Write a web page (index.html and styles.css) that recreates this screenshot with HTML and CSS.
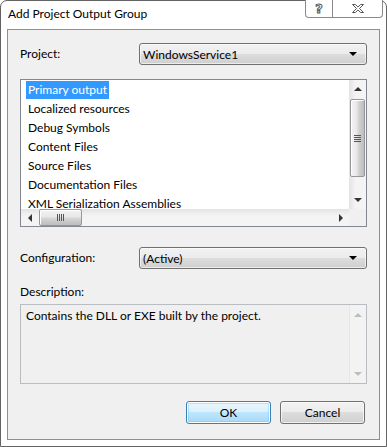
FILE: index.html
```html
<!DOCTYPE html>
<html>
<head>
<meta charset="utf-8">
<link rel="stylesheet" href="styles.css">
</head>
<body>
<div class="window">
  <div class="titlebar">
    <div class="title">Add Project Output Group</div>
    <div class="caption-btns">
      <div class="cap help"><span class="qmark">?</span></div>
      <div class="cap close">
        <svg width="14" height="11" viewBox="0 0 14 11"><path d="M1.5 1.5h3l2.5 2.6 2.5-2.6h3l-4 4 4 4h-3l-2.5-2.6-2.5 2.6h-3l4-4z" fill="#fff" stroke="#555" stroke-width="1" stroke-linejoin="round"/></svg>
      </div>
    </div>
  </div>
  <div class="client">
    <div class="row first">
      <div class="label">Project:</div>
      <div class="combo"><span>WindowsService1</span><i class="drop"></i></div>
    </div>
    <div class="listbox">
      <div class="items">
        <div class="item sel">Primary output</div>
        <div class="item">Localized resources</div>
        <div class="item">Debug Symbols</div>
        <div class="item">Content Files</div>
        <div class="item">Source Files</div>
        <div class="item">Documentation Files</div>
        <div class="item">XML Serialization Assemblies</div>
      </div>
      <div class="vscroll">
        <div class="arrow"><i class="tri up"></i></div>
        <div class="vtrack">
          <div class="vthumb"><i class="grip-v"></i></div>
        </div>
        <div class="arrow"><i class="tri down"></i></div>
      </div>
      <div class="hscroll">
        <div class="harrow"><i class="tri left"></i></div>
        <div class="htrack">
          <div class="hthumb"><i class="grip-h"></i></div>
        </div>
        <div class="harrow"><i class="tri right"></i></div>
      </div>
      <div class="corner"></div>
    </div>
    <div class="row config">
      <div class="label">Configuration:</div>
      <div class="combo"><span>(Active)</span><i class="drop"></i></div>
    </div>
    <div class="desc-label">Description:</div>
    <div class="descbox">
      <div class="desc-text">Contains the DLL or EXE built by the project.</div>
      <div class="dscroll">
        <i class="tri up dis"></i>
        <i class="tri down dis"></i>
      </div>
    </div>
    <div class="buttons">
      <button class="btn default">OK</button>
      <button class="btn">Cancel</button>
    </div>
  </div>
</div>
</body>
</html>
```

FILE: styles.css
```css
html, body {
  margin: 0;
  padding: 0;
  background: #ffffff;
}
body {
  font-family: "Lato", "Noto Sans", sans-serif;
  font-size: 12px;
  color: #000;
}
.window {
  width: 387px;
  height: 447px;
  box-sizing: border-box;
  border: 1px solid #636363;
  border-radius: 7px 7px 0 0;
  background: #ffffff;
  padding: 0 6px 6px 6px;
  display: flex;
  flex-direction: column;
}
.titlebar {
  height: 28px;
  display: flex;
  justify-content: space-between;
  align-items: flex-start;
  margin-right: -3px;
}
.title {
  padding-top: 5px;
  padding-left: 1px;
  font-size: 12px;
  line-height: 16px;
}
.caption-btns {
  display: flex;
  height: 18px;
  border: 1px solid #8a8a8a;
  border-top: none;
  border-radius: 0 0 4px 4px;
  background: #fff;
  box-sizing: border-box;
  margin-top: -1px;
}
.cap {
  display: flex;
  align-items: center;
  justify-content: center;
}
.help {
  width: 26px;
  border-right: 1px solid #8a8a8a;
}
.close {
  width: 49px;
}
.qmark {
  font-family: "DejaVu Sans", sans-serif;
  font-weight: bold;
  font-size: 13px;
  line-height: 14px;
  color: #fff;
  -webkit-text-stroke: 1px #555;
}
.client {
  flex: 1;
  border: 1px solid #8e8f8f;
  background: #f0f0f0;
  padding: 0 12px 0 12px;
  display: flex;
  flex-direction: column;
}
.row {
  display: grid;
  grid-template-columns: 119px 1fr;
  align-items: center;
}
.row.first { margin-top: 13px; }
.row.config { margin-top: 20px; }
.label {
  line-height: 16px;
}
.combo {
  height: 22px;
  box-sizing: border-box;
  border: 1px solid #707070;
  border-radius: 3px;
  background: linear-gradient(to bottom, #f2f2f2 0%, #ebebeb 50%, #dddddd 50%, #cfcfcf 100%);
  box-shadow: inset 0 0 0 1px rgba(255,255,255,0.6);
  display: flex;
  align-items: center;
  justify-content: space-between;
  padding: 0 9px 0 3px;
}
.drop {
  width: 0;
  height: 0;
  border-left: 4px solid transparent;
  border-right: 4px solid transparent;
  border-top: 4px solid #000;
}
.listbox {
  margin-top: 14px;
  height: 148px;
  box-sizing: border-box;
  border: 1px solid #828790;
  background: #fff;
  display: grid;
  grid-template-columns: 1fr 17px;
  grid-template-rows: 1fr 17px;
}
.items {
  overflow: hidden;
  padding: 1px 0 0 5px;
  display: flex;
  flex-direction: column;
  align-items: flex-start;
}
.item {
  height: 19px;
  line-height: 18px;
  padding: 0 2px;
  white-space: nowrap;
  flex-shrink: 0;
}
.item.sel {
  background: #3399ff;
  color: #fff;
  height: 18px;
  margin-bottom: 1px;
}
.vscroll {
  display: flex;
  flex-direction: column;
  background: linear-gradient(to right, #e3e3e3, #f4f4f4 40%, #f4f4f4);
}
.arrow {
  height: 18px;
  display: flex;
  align-items: center;
  justify-content: center;
}
.vtrack {
  flex: 1;
  padding-top: 1px;
}
.vthumb {
  height: 78px;
  box-sizing: border-box;
  border: 1px solid #979797;
  border-radius: 2px;
  margin: 0 1px 0 1px;
  background: linear-gradient(to right, #f3f3f3, #e8e8e8 45%, #d6d6d6 55%, #bcbcbc);
  box-shadow: inset 1px 1px 0 #fff;
  display: flex;
  align-items: center;
  justify-content: center;
}
.grip-v {
  width: 7px;
  height: 7px;
  background: repeating-linear-gradient(to bottom, #555 0 1px, transparent 1px 2px);
}
.hscroll {
  display: flex;
  background: linear-gradient(to bottom, #e3e3e3, #f4f4f4 40%, #f4f4f4);
}
.harrow {
  width: 17px;
  display: flex;
  align-items: center;
  justify-content: center;
}
.htrack {
  flex: 1;
}
.hthumb {
  width: 43px;
  height: 17px;
  margin-left: 1px;
  box-sizing: border-box;
  border: 1px solid #979797;
  border-radius: 2px;
  background: linear-gradient(to bottom, #f3f3f3, #e8e8e8 45%, #d6d6d6 55%, #bcbcbc);
  box-shadow: inset 1px 1px 0 #fff;
  display: flex;
  align-items: center;
  justify-content: center;
}
.grip-h {
  width: 7px;
  height: 7px;
  background: repeating-linear-gradient(to right, #555 0 1px, transparent 1px 2px);
}
.corner {
  background: #f0f0f0;
}
.tri {
  width: 0;
  height: 0;
  display: block;
}
.tri.up {
  border-left: 4px solid transparent;
  border-right: 4px solid transparent;
  border-bottom: 4px solid #333;
}
.tri.down {
  border-left: 4px solid transparent;
  border-right: 4px solid transparent;
  border-top: 4px solid #333;
}
.tri.left {
  border-top: 4px solid transparent;
  border-bottom: 4px solid transparent;
  border-right: 4px solid #333;
}
.tri.right {
  border-top: 4px solid transparent;
  border-bottom: 4px solid transparent;
  border-left: 4px solid #333;
}
.tri.up.dis { border-bottom-color: #bdbdbd; }
.tri.down.dis { border-top-color: #bdbdbd; }
.desc-label {
  margin-top: 15px;
  line-height: 16px;
}
.descbox {
  margin-top: 4px;
  height: 80px;
  box-sizing: border-box;
  border: 1px solid #b9bcc0;
  background: #f0f0f0;
  display: flex;
}
.desc-text {
  flex: 1;
  padding: 3px 0 0 5px;
  line-height: 16px;
}
.dscroll {
  width: 16px;
  display: flex;
  flex-direction: column;
  justify-content: space-between;
  align-items: center;
  padding: 8px 0 7px;
  background: #f3f3f3;
  border-left: 1px solid #e6e6e6;
}
.buttons {
  margin-top: 17px;
  display: flex;
  justify-content: flex-end;
  gap: 9px;
  padding-right: 2px;
}
.btn {
  font-family: inherit;
  font-size: 12px;
  color: #000;
  width: 85px;
  height: 23px;
  box-sizing: border-box;
  border: 1px solid #707070;
  border-radius: 3px;
  background: linear-gradient(to bottom, #f2f2f2 0%, #ebebeb 50%, #dddddd 50%, #cfcfcf 100%);
  box-shadow: inset 0 0 0 1px rgba(255,255,255,0.7);
  padding: 0;
}
.btn.default {
  border-color: #3c7fb1;
  background: linear-gradient(to bottom, #eaf6fd 0%, #d9f0fc 50%, #bee6fd 50%, #a7d9f5 100%);
  box-shadow: inset 0 0 0 1px #ffffff, inset 0 0 0 2px rgba(100,190,240,0.35);
}
```
